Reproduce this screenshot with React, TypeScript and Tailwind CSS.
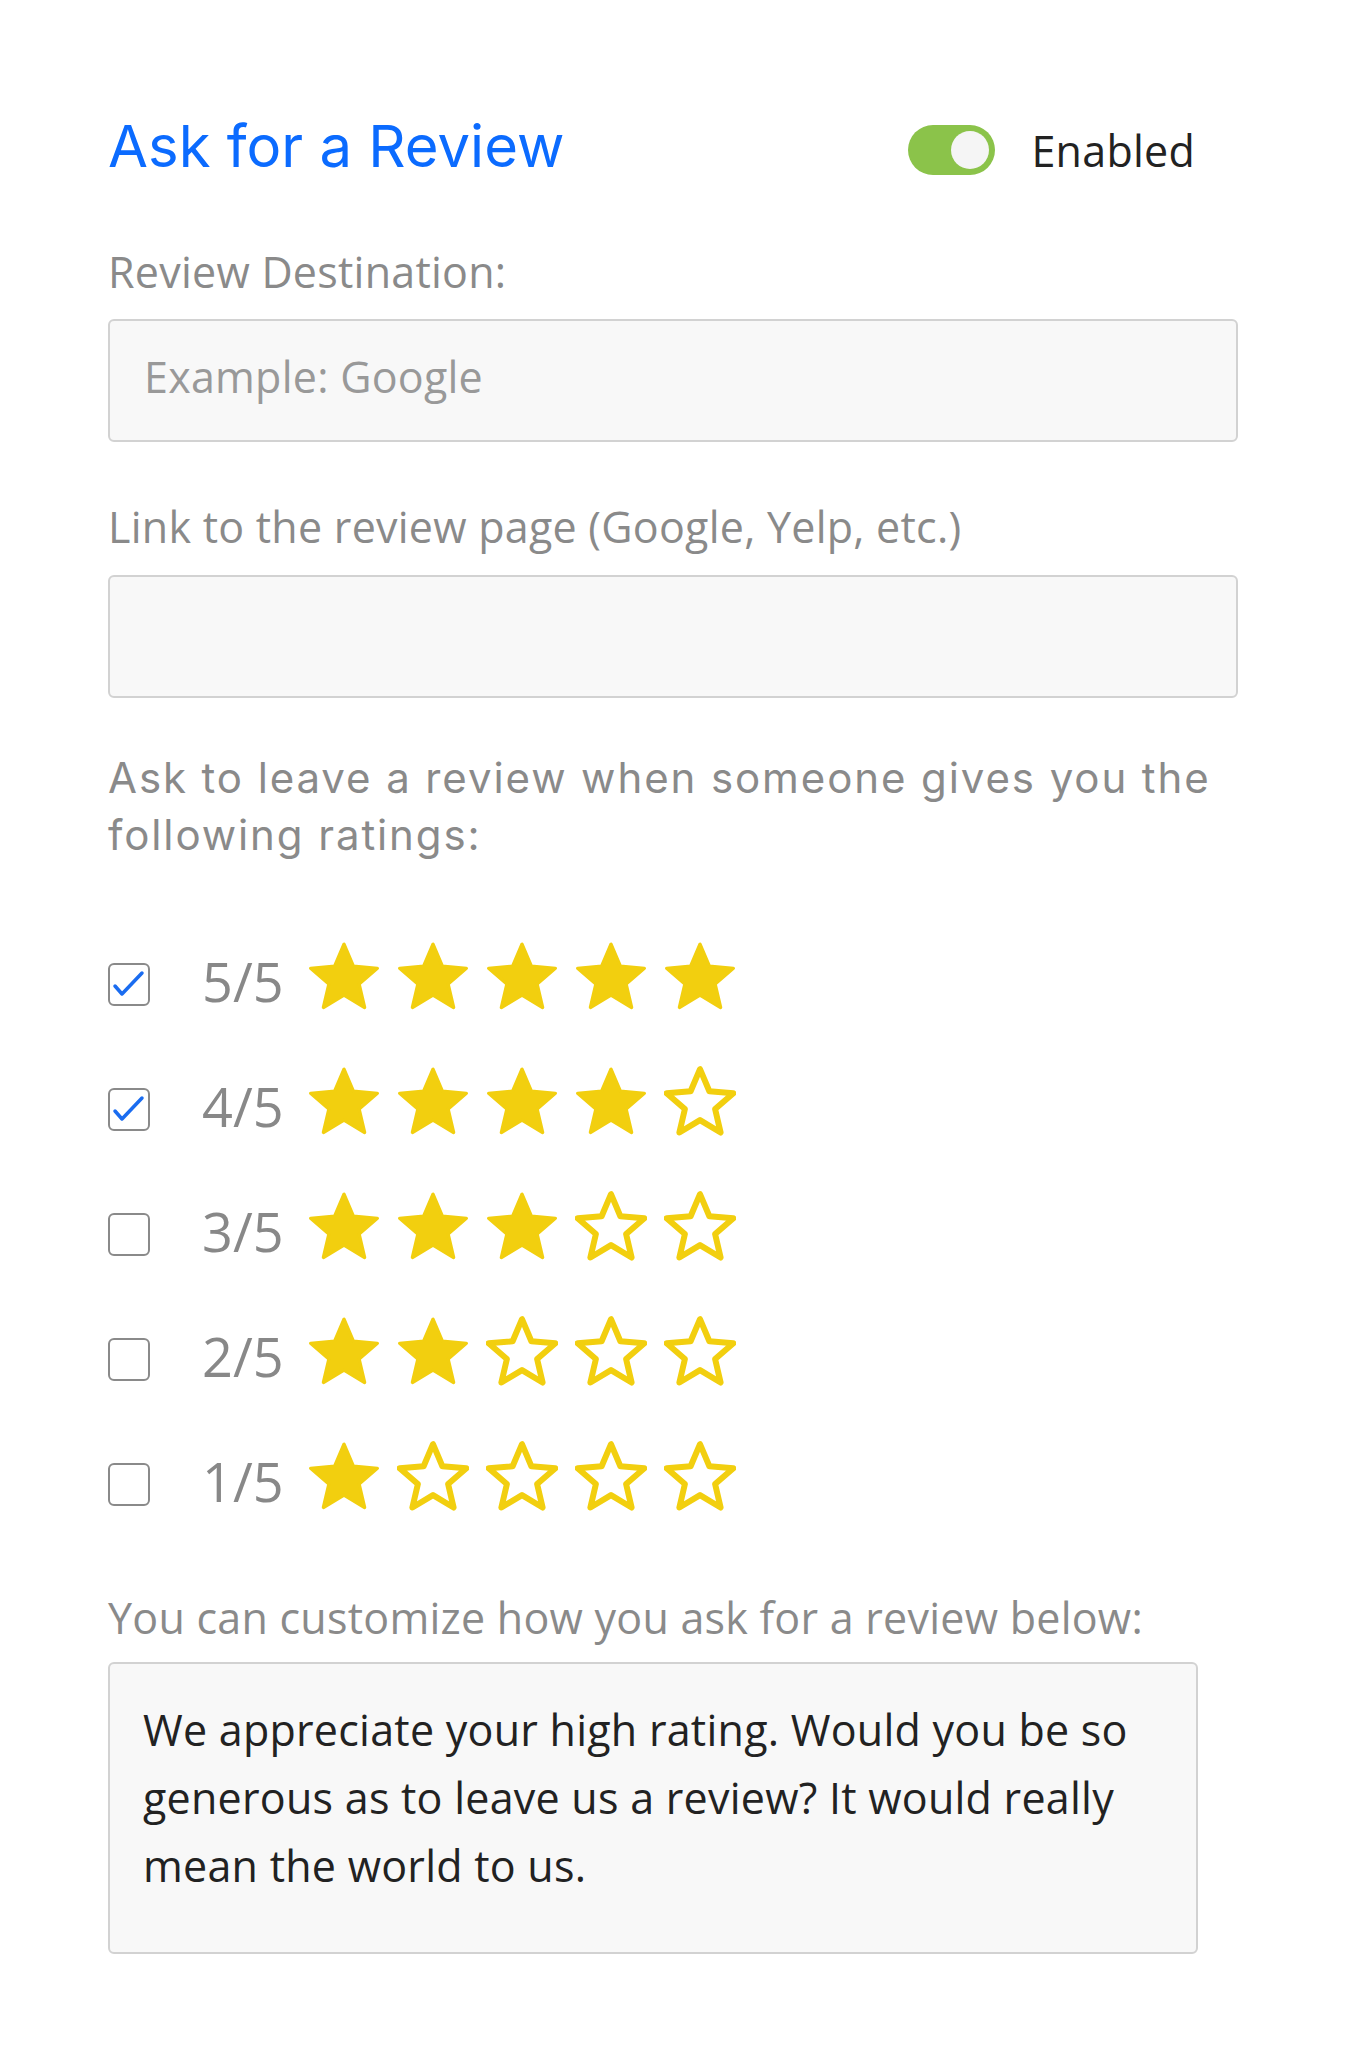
import { useState } from 'react';

const STAR = 'M12 17.27L18.18 21l-1.64-7.03L22 9.24l-7.19-.61L12 2 9.19 8.63 2 9.24l5.46 4.73L5.82 21z';

function Star({ filled }: { filled: boolean }) {
    return (
        <svg viewBox="1.2 1.2 21.6 20.7" className="h-[70px] w-[72px] shrink-0">
            <path
                d={STAR}
                fill={filled ? '#f2cf0f' : 'none'}
                stroke="#f2cf0f"
                strokeWidth={filled ? 1 : 1.8}
                strokeLinejoin="round"
            />
        </svg>
    );
}

function Checkbox({ checked }: { checked: boolean }) {
    return (
        <div className="mt-[22px] h-[43px] w-[42px] shrink-0 rounded-[6px] border-2 border-[#8a8a8a]">
            {checked && (
                <svg viewBox="0 0 38 39" className="h-full w-full">
                    <path
                        d="M5 21 L12 29 L32 8"
                        fill="none"
                        stroke="#1a6cf0"
                        strokeWidth={3.5}
                        strokeLinecap="round"
                        strokeLinejoin="round"
                    />
                </svg>
            )}
        </div>
    );
}

const ratings = [
    { value: 5, checked: true },
    { value: 4, checked: true },
    { value: 3, checked: false },
    { value: 2, checked: false },
    { value: 1, checked: false },
];

export default function App() {
    const [enabled] = useState(true);

    return (
        <div className="min-h-screen bg-white pl-[108px] pt-[120px] font-['Open_Sans',sans-serif] tracking-[0.25px]">
            {/* header */}
            <div className="flex h-[60px] w-[1087px] items-center justify-between">
                <h1 className="mb-[8px] font-['Inter',sans-serif] text-[58px] leading-none font-normal tracking-normal text-[#0b6bff]">
                    Ask for a Review
                </h1>
                <div className="flex items-center gap-[36px]">
                    <div
                        className={`flex h-[50px] w-[87px] items-center rounded-full px-[6px] ${
                            enabled ? 'justify-end bg-[#8bc34a]' : 'justify-start bg-gray-300'
                        }`}
                    >
                        <div className="h-[38px] w-[38px] rounded-full bg-[#f5f5f5]" />
                    </div>
                    <span className="text-[43px] leading-[57px] text-[#222]">Enabled</span>
                </div>
            </div>

            <label className="mt-[63px] block text-[43px] leading-[57px] text-[#8a8a8a]">Review Destination:</label>
            <input
                type="text"
                placeholder="Example: Google"
                className="mt-[19px] block h-[123px] w-[1130px] rounded-[6px] border-2 border-[#d2d2d2] bg-[#f8f8f8] px-[34px] pb-[8px] text-[43px] text-[#222] outline-none placeholder:text-[#999]"
            />

            <label className="mt-[56px] block text-[43px] leading-[57px] text-[#8a8a8a]">
                Link to the review page (Google, Yelp, etc.)
            </label>
            <input
                type="text"
                className="mt-[20px] block h-[123px] w-[1130px] rounded-[6px] border-2 border-[#d2d2d2] bg-[#f8f8f8] px-[34px] text-[43px] text-[#222] outline-none"
            />

            <p className="mt-[51px] w-[1130px] font-['Inter',sans-serif] text-[42px] leading-[57px] tracking-[1.9px] text-[#8a8a8a]">
                Ask to leave a review when someone gives you the following ratings:
            </p>

            <div className="mt-[78px] flex flex-col gap-[55px]">
                {ratings.map((r) => (
                    <div key={r.value} className="flex items-start">
                        <Checkbox checked={r.checked} />
                        <span className="ml-[52px] mt-[13px] w-[82px] text-[54px] leading-none tracking-normal text-[#888]">
                            {r.value}/5
                        </span>
                        <div className="ml-[24px] flex gap-[17px]">
                            {[1, 2, 3, 4, 5].map((i) => (
                                <Star key={i} filled={i <= r.value} />
                            ))}
                        </div>
                    </div>
                ))}
            </div>

            <label className="mt-[78px] block text-[43px] leading-[57px] text-[#8a8a8a]">
                You can customize how you ask for a review below:
            </label>
            <textarea
                className="mt-[16px] block h-[292px] w-[1090px] resize-none rounded-[6px] border-2 border-[#d2d2d2] bg-[#f8f8f8] px-[33px] pt-[32px] text-[43px] leading-[68px] text-[#222] outline-none"
                defaultValue="We appreciate your high rating. Would you be so generous as to leave us a review? It would really mean the world to us."
            />
        </div>
    );
}
